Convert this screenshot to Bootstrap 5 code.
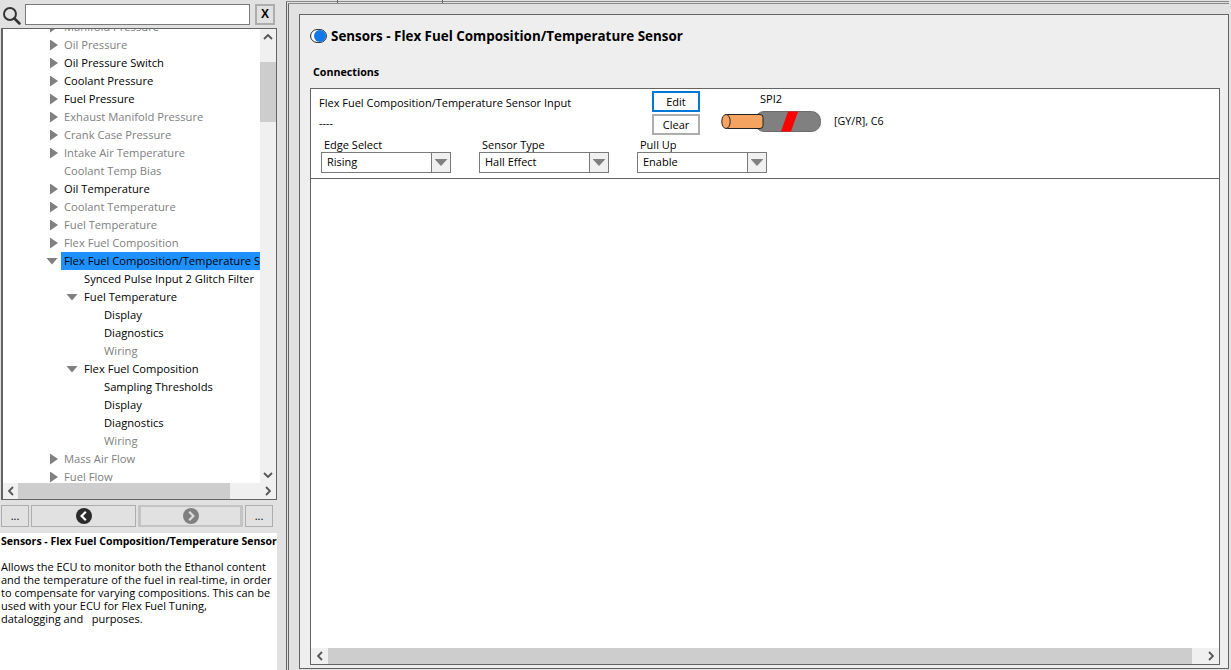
<!DOCTYPE html>
<html lang="en"><head><meta charset="utf-8"><title>Sensors</title>
<link href="https://cdn.jsdelivr.net/npm/bootstrap@5.3.0/dist/css/bootstrap.min.css" rel="stylesheet">
<style>
html,body{height:670px;overflow:hidden}
body{background:#e1e1e1;font-family:"Open Sans","Noto Sans",sans-serif;font-size:11.2px;color:#000;line-height:18px}
.app-shell{width:1231px;height:670px}
.side{width:277px;flex:none}
.search-row{height:28px;padding:4px 2px 3px 3px}
.search-box{width:226px;height:21px;margin-left:4px;background:#fff;border:1px solid #7a7a7a}
.x-btn{width:20px;height:21px;margin-left:5px;border:2px solid #adadad;background:#e1e1e1;font-weight:700;font-size:12px;line-height:16px;text-align:center;font-family:"Liberation Sans",sans-serif}
.tree-box{margin-left:1px;width:276px;height:472px;border:1px solid #646464;border-left-width:2px;background:#fff}
.tree-view{height:454px;overflow:hidden}
.tree-list{margin-top:-11px;width:257px;overflow:hidden;flex:none}
.tree-row{height:18px;white-space:nowrap;display:flex;align-items:center}
.lv1{padding-left:61px}.lv2{padding-left:81px}.lv3{padding-left:101px}
.muted-row{color:#808080}
.tree-text{height:18px;line-height:18px}
.sel{width:199px;flex:none;margin-left:-3px;padding-left:3px;background:#1e90ff;overflow:hidden}
.tw{display:block;flex:none}
.tw-r{width:8px;height:11px;margin-left:-14px;margin-right:6px;background:#808080;clip-path:polygon(0 0,100% 50%,0 100%)}
.tw-d{width:12px;height:7px;margin-left:-18px;margin-right:6px;background:#808080;clip-path:polygon(0 0,100% 0,50% 100%)}
.vbar{width:16px;background:#f0f0f0;flex:none}
.vthumb{height:60px;margin-top:17px;background:#cdcdcd}
.sb-end{height:16px;flex:none;background:#f0f0f0}
.sb-arrow{width:17px;height:16px;flex:none;display:flex;align-items:center;justify-content:center}
.tree-box .hbar .sb-arrow:first-child{width:15px}
.sb-track{flex:1;background:#f0f0f0}
.nav-row{margin-top:5px;height:23px;padding-left:1px;gap:2px}
.nav-btn{height:22px;border:1px solid #adadad;background:#e1e1e1;display:flex;align-items:center;justify-content:center;font-size:11px;line-height:14px}
.nb-s{width:28px}.nb-l{width:105px}
.nb-off{border-width:2px 3px;border-color:#c4c4c4}
.desc{margin-top:5px;height:137px;background:#fff;padding:0 0 0 1px;font-size:11px}
.desc-title{font-weight:700;height:27px;line-height:16px;white-space:nowrap;overflow:hidden;font-size:10.5px}
.desc-text{line-height:13px;white-space:nowrap}
.main-area{flex:1;padding:1px 2px 0 9px}
.frame{height:669px;border-left:3px double #646464;border-top:3px double #8a8a8a;padding:10px 0 1px 10px;position:relative}
.panel{height:655px;background:#eee;border:1px solid #646464;padding:0 8px 3px 10px}
.panel-head{height:50px;display:flex;align-items:flex-start;padding-top:12px}
.led-icon{margin-top:2px;flex:none}
.p-title{font-weight:700;font-size:13.4px;line-height:18px;margin-left:4px}
.conn{font-weight:700;font-size:10.7px;line-height:14px;margin-left:3px;height:23px}
.inner{height:577px;background:#fff;border:1px solid #646464;display:flex;flex-direction:column}
.cfg{height:90px;border-bottom:1px solid #646464;flex:none}
.cfg-top{height:51px;display:flex;padding-top:2px}
.cfg-label{width:341px;padding:2px 0 0 8px;line-height:20px;font-size:11px}
.btn-col{width:48px;flex:none;display:flex;flex-direction:column;gap:2px}
.w-btn{height:21px;background:#fdfdfd;border:2px solid #adadad;font-size:11px;line-height:17px;text-align:center}
.w-btn.on{border-color:#0078d7}
.wire-col{width:100px;margin-left:21px;flex:none}
.wire-name{text-align:center;font-size:11px;line-height:16px;height:20px}
.wire-tag{margin:23px 0 0 13px;font-size:10.7px;line-height:14px}
.fields{display:flex;padding-left:10px;gap:28px}
.fld{width:130px}
.fld-label{line-height:13px;height:14px;padding-left:3px;font-size:11px;margin-top:-2px}
.fld-sel{height:21px;border:1px solid #7a7a7a;display:flex;background:#fff;line-height:17px;font-size:11px}
.fld-val{flex:1;padding-left:5px}
.fld-arrow{width:19px;border-left:1px solid #7a7a7a;background:#f0f0f0;display:flex;align-items:center;justify-content:center}
.fld-arrow i{display:block;width:13px;height:7px;background:#808080;clip-path:polygon(0 0,100% 0,50% 100%)}
.blank{flex:1}
.hbar{height:16px;background:#f0f0f0;display:flex;flex:none}
.hthumb{background:#cdcdcd}
.tick-a,.tick-b{position:absolute;top:-4px;width:1px;height:3px;background:#646464}
.tick-a{left:48px}.tick-b{left:153px}
</style></head><body>
<div class="app-shell d-flex">
<div class="side d-flex flex-column">
 <div class="search-row d-flex">
  <svg width="18" height="21" viewBox="0 0 18 21"><circle cx="7" cy="10" r="6" fill="none" stroke="#333" stroke-width="2"/><path d="M11.500 14.500l5 5" stroke="#333" stroke-width="2.600" stroke-linecap="round"/></svg>
  <div class="search-box"></div><div class="x-btn">X</div>
 </div>
 <div class="tree-box d-flex flex-column">
  <div class="tree-view d-flex">
   <div class="tree-list">
    <div class="tree-row lv1 muted-row"><i class="tw tw-r"></i><span class="tree-text">Manifold Pressure</span></div>
    <div class="tree-row lv1 muted-row"><i class="tw tw-r"></i><span class="tree-text">Oil Pressure</span></div>
    <div class="tree-row lv1"><i class="tw tw-r"></i><span class="tree-text">Oil Pressure Switch</span></div>
    <div class="tree-row lv1"><i class="tw tw-r"></i><span class="tree-text">Coolant Pressure</span></div>
    <div class="tree-row lv1"><i class="tw tw-r"></i><span class="tree-text">Fuel Pressure</span></div>
    <div class="tree-row lv1 muted-row"><i class="tw tw-r"></i><span class="tree-text">Exhaust Manifold Pressure</span></div>
    <div class="tree-row lv1 muted-row"><i class="tw tw-r"></i><span class="tree-text">Crank Case Pressure</span></div>
    <div class="tree-row lv1 muted-row"><i class="tw tw-r"></i><span class="tree-text">Intake Air Temperature</span></div>
    <div class="tree-row lv1 muted-row"><span class="tree-text">Coolant Temp Bias</span></div>
    <div class="tree-row lv1"><i class="tw tw-r"></i><span class="tree-text">Oil Temperature</span></div>
    <div class="tree-row lv1 muted-row"><i class="tw tw-r"></i><span class="tree-text">Coolant Temperature</span></div>
    <div class="tree-row lv1 muted-row"><i class="tw tw-r"></i><span class="tree-text">Fuel Temperature</span></div>
    <div class="tree-row lv1 muted-row"><i class="tw tw-r"></i><span class="tree-text">Flex Fuel Composition</span></div>
    <div class="tree-row lv1"><i class="tw tw-d"></i><span class="tree-text sel">Flex Fuel Composition/Temperature Sensor</span></div>
    <div class="tree-row lv2"><span class="tree-text">Synced Pulse Input 2 Glitch Filter</span></div>
    <div class="tree-row lv2"><i class="tw tw-d"></i><span class="tree-text">Fuel Temperature</span></div>
    <div class="tree-row lv3"><span class="tree-text">Display</span></div>
    <div class="tree-row lv3"><span class="tree-text">Diagnostics</span></div>
    <div class="tree-row lv3 muted-row"><span class="tree-text">Wiring</span></div>
    <div class="tree-row lv2"><i class="tw tw-d"></i><span class="tree-text">Flex Fuel Composition</span></div>
    <div class="tree-row lv3"><span class="tree-text">Sampling Thresholds</span></div>
    <div class="tree-row lv3"><span class="tree-text">Display</span></div>
    <div class="tree-row lv3"><span class="tree-text">Diagnostics</span></div>
    <div class="tree-row lv3 muted-row"><span class="tree-text">Wiring</span></div>
    <div class="tree-row lv1 muted-row"><i class="tw tw-r"></i><span class="tree-text">Mass Air Flow</span></div>
    <div class="tree-row lv1 muted-row"><i class="tw tw-r"></i><span class="tree-text">Fuel Flow</span></div>
   </div>
   <div class="vbar d-flex flex-column">
    <div class="sb-end d-flex align-items-center justify-content-center"><svg width="10" height="6" viewBox="0 0 10 6"><path d="M1 5l4-4 4 4" fill="none" stroke="#555" stroke-width="1.8"/></svg></div>
    <div class="vthumb"></div>
    <div class="flex-grow-1"></div>
    <div class="sb-end d-flex align-items-center justify-content-center"><svg width="10" height="6" viewBox="0 0 10 6"><path d="M1 1l4 4 4-4" fill="none" stroke="#555" stroke-width="1.8"/></svg></div>
   </div>
  </div>
  <div class="hbar">
   <div class="sb-arrow"><svg width="6" height="10" viewBox="0 0 6 10"><path d="M5 1L1 5l4 4" fill="none" stroke="#555" stroke-width="1.8"/></svg></div>
   <div class="hthumb" style="width:212px"></div>
   <div class="sb-track"></div>
   <div class="sb-arrow"><svg width="6" height="10" viewBox="0 0 6 10"><path d="M1 1l4 4-4 4" fill="none" stroke="#555" stroke-width="1.8"/></svg></div>
  </div>
 </div>
 <div class="nav-row d-flex">
  <div class="nav-btn nb-s">...</div>
  <div class="nav-btn nb-l"><svg width="16" height="16" viewBox="0 0 16 16"><circle cx="8" cy="8" r="8" fill="#2b2b2b"/><path d="M9.800 3.800L5.600 8l4.200 4.200" fill="none" stroke="#fff" stroke-width="2.200"/></svg></div>
  <div class="nav-btn nb-l nb-off"><svg width="16" height="16" viewBox="0 0 16 16"><circle cx="8" cy="8" r="8" fill="#808080"/><path d="M6.200 3.800L10.400 8l-4.200 4.200" fill="none" stroke="#ddd" stroke-width="2.200"/></svg></div>
  <div class="nav-btn nb-s">...</div>
 </div>
 <div class="desc">
  <div class="desc-title">Sensors - Flex Fuel Composition/Temperature Sensor</div>
  <div class="desc-text">Allows the ECU to monitor both the Ethanol content<br>and the temperature of the fuel in real-time, in order<br>to compensate for varying compositions. This can be<br>used with your ECU for Flex Fuel Tuning,<br>datalogging and &nbsp; purposes.</div>
 </div>
</div>
<div class="main-area">
 <div class="frame">
  <i class="tick-a"></i><i class="tick-b"></i>
  <div class="panel">
   <div class="panel-head">
    <svg width="17" height="14" viewBox="0 0 17 14" class="led-icon"><rect x=".6" y=".6" width="15.800" height="12.800" rx="6.400" fill="#fff" stroke="#222"/><circle cx="10" cy="7" r="6" fill="#1478e6"/></svg>
    <div class="p-title">Sensors - Flex Fuel Composition/Temperature Sensor</div>
   </div>
   <div class="conn">Connections</div>
   <div class="inner">
    <div class="cfg">
     <div class="cfg-top">
      <div class="cfg-label">Flex Fuel Composition/Temperature Sensor Input<br>----</div>
      <div class="btn-col"><div class="w-btn on">Edit</div><div class="w-btn">Clear</div></div>
      <div class="wire-col">
       <div class="wire-name">SPI2</div>
       <svg width="100" height="21" viewBox="0 0 100 21" class="d-block">
        <rect x="34" y=".5" width="65.500" height="20" rx="9" fill="#808080" stroke="#6a6a6a"/>
        <path d="M67 .5h10L70 20.500H60z" fill="#f00"/>
        <path d="M34 4h8v13h-8z" fill="#6f6f6f"/>
        <rect x="4" y="3.500" width="38" height="14" rx="3" fill="#f4a460" stroke="#222"/>
        <ellipse cx="5" cy="10.500" rx="4.200" ry="7" fill="#f4a460" stroke="#222"/>
       </svg>
      </div>
      <div class="wire-tag">[GY/R], C6</div>
     </div>
     <div class="fields">
      <div class="fld"><div class="fld-label">Edge Select</div><div class="fld-sel"><div class="fld-val">Rising</div><div class="fld-arrow"><i></i></div></div></div>
      <div class="fld"><div class="fld-label">Sensor Type</div><div class="fld-sel"><div class="fld-val">Hall Effect</div><div class="fld-arrow"><i></i></div></div></div>
      <div class="fld"><div class="fld-label">Pull Up</div><div class="fld-sel"><div class="fld-val">Enable</div><div class="fld-arrow"><i></i></div></div></div>
     </div>
    </div>
    <div class="blank"></div>
    <div class="hbar">
     <div class="sb-arrow"><svg width="6" height="10" viewBox="0 0 6 10"><path d="M5 1L1 5l4 4" fill="none" stroke="#555" stroke-width="1.8"/></svg></div>
     <div class="hthumb" style="width:864px"></div>
     <div class="sb-track"></div>
     <div class="sb-arrow"><svg width="6" height="10" viewBox="0 0 6 10"><path d="M1 1l4 4-4 4" fill="none" stroke="#555" stroke-width="1.8"/></svg></div>
    </div>
   </div>
  </div>
 </div>
</div>
</div>
<script src="https://cdn.jsdelivr.net/npm/bootstrap@5.3.0/dist/js/bootstrap.bundle.min.js"></script>
</body></html>
